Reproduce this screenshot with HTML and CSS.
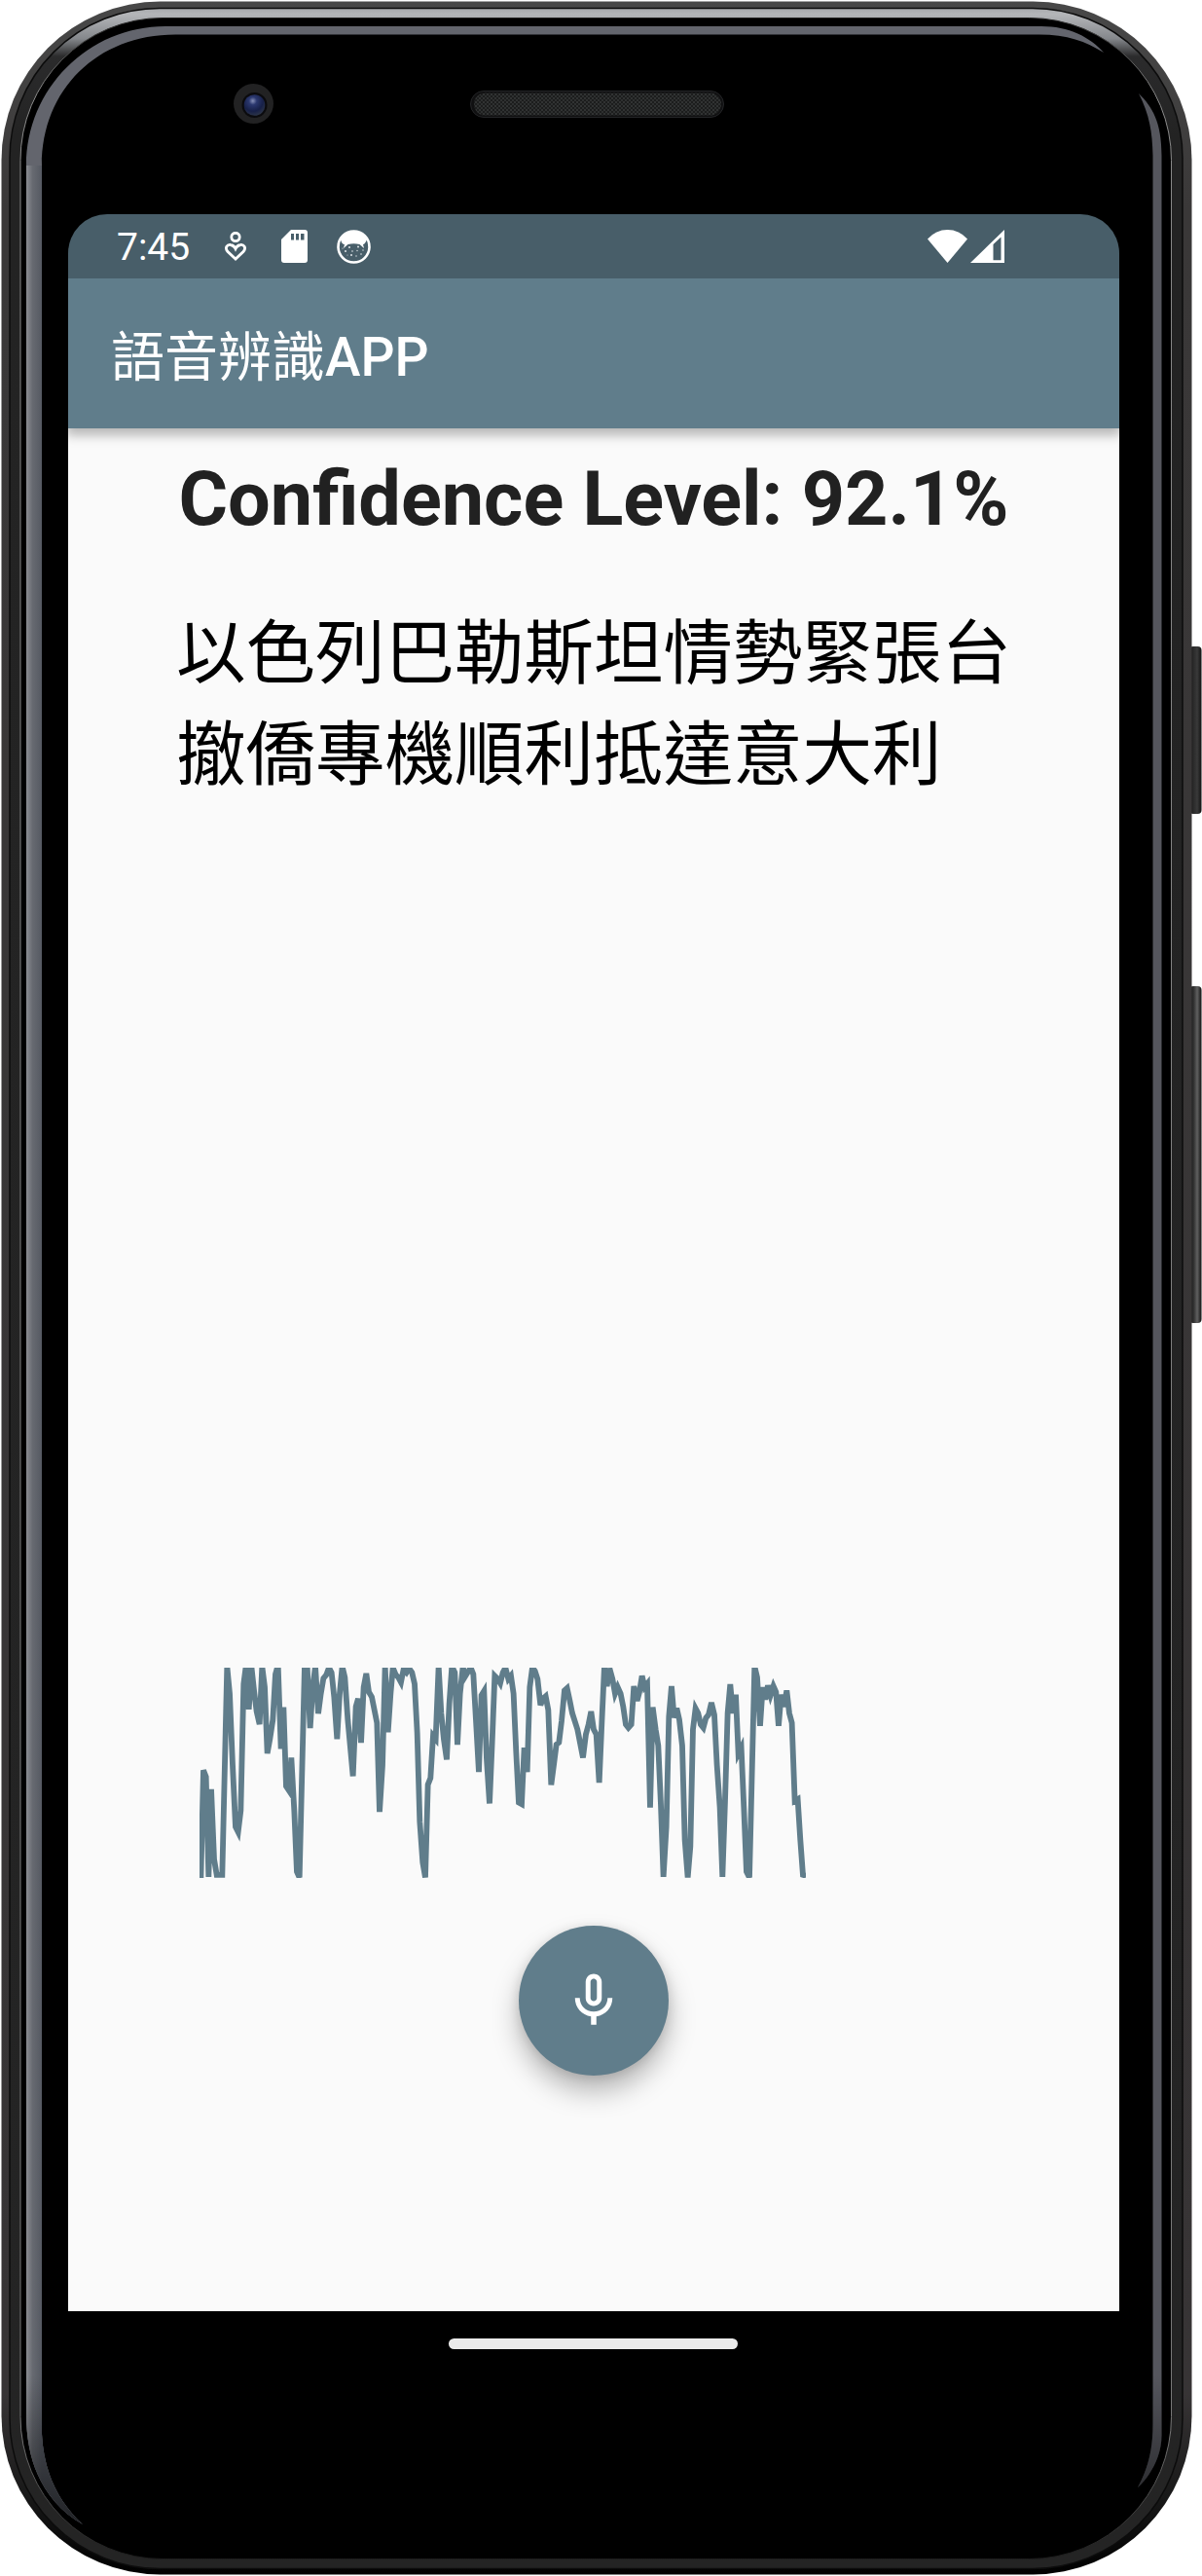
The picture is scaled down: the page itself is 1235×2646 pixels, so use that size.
FILE: index.html
```
<!DOCTYPE html>
<html lang="zh-Hant">
<head>
<meta charset="utf-8">
<title>語音辨識APP</title>
<link rel="stylesheet" href="styles.css">
</head>
<body>
<div class="phone">
  <svg class="phone-body" viewBox="0 0 1235 2646" aria-hidden="true">
    <defs>
      <linearGradient id="shell" x1="0" y1="0" x2="0" y2="1"><stop offset="0" stop-color="#484848"/><stop offset=".08" stop-color="#3a3838"/><stop offset=".93" stop-color="#373435"/><stop offset=".97" stop-color="#181818"/><stop offset="1" stop-color="#000"/></linearGradient>
      <linearGradient id="rim" gradientUnits="userSpaceOnUse" x1="0" y1="8" x2="0" y2="2638"><stop offset="0" stop-color="#a5a7aa"/><stop offset=".0025" stop-color="#b4b6b9"/><stop offset=".012" stop-color="#85888c"/><stop offset=".019" stop-color="#2b2b2c"/><stop offset=".05" stop-color="#232323"/><stop offset="1" stop-color="#242424"/></linearGradient>
      <linearGradient id="line" gradientUnits="userSpaceOnUse" x1="0" y1="18" x2="0" y2="2629"><stop offset="0" stop-color="#222"/><stop offset=".03" stop-color="#8a8a8a"/><stop offset=".95" stop-color="#777"/><stop offset="1" stop-color="#1c1c1c"/></linearGradient>
      <linearGradient id="glint" gradientUnits="userSpaceOnUse" x1="27" y1="0" x2="43" y2="0"><stop offset="0" stop-color="#8b8d92"/><stop offset=".4" stop-color="#676a71"/><stop offset="1" stop-color="#555962"/></linearGradient>
      <linearGradient id="tail" gradientUnits="userSpaceOnUse" x1="0" y1="2440" x2="0" y2="2590"><stop offset="0" stop-color="#000" stop-opacity="0"/><stop offset="1" stop-color="#000" stop-opacity=".6"/></linearGradient>
      <linearGradient id="key" x1="0" y1="0" x2="1" y2="0"><stop offset="0" stop-color="#111"/><stop offset=".35" stop-color="#2b2b2b"/><stop offset=".65" stop-color="#393939"/><stop offset="1" stop-color="#111"/></linearGradient>
      <linearGradient id="key2" x1="0" y1="0" x2="1" y2="0"><stop offset="0" stop-color="#111"/><stop offset=".35" stop-color="#303030"/><stop offset=".65" stop-color="#606060"/><stop offset="1" stop-color="#111"/></linearGradient>
      <radialGradient id="lens" cx=".42" cy=".3" r=".75"><stop offset="0" stop-color="#8790b8"/><stop offset=".25" stop-color="#2b386f"/><stop offset=".65" stop-color="#172048"/><stop offset="1" stop-color="#303848"/></radialGradient>
      <pattern id="mesh" width="4" height="4" patternUnits="userSpaceOnUse"><rect width="4" height="4" fill="#1c1d1d"/><circle cx="1" cy="1" r=".8" fill="#4b4e4e"/><circle cx="3" cy="3" r=".8" fill="#454848"/></pattern>
    </defs>
    <rect x="1222" y="664" width="12.5" height="172" rx="4" fill="url(#key)"/>
    <rect x="1222" y="1013" width="12.5" height="346" rx="4" fill="url(#key2)"/>
    <rect x="1.5" y="1.5" width="1223" height="2643" rx="163" fill="url(#shell)"/>
    <rect x="10" y="8.5" width="1205" height="2630" rx="154" fill="url(#rim)" stroke="#0c0c0c" stroke-width="1.5"/>
    <rect x="21" y="18.5" width="1182.500" height="2610" rx="146" fill="#000" stroke="url(#line)" stroke-width="1"/>
    <rect x="23.500" y="20" width="1177" height="2606" rx="144" fill="#000"/>
    <path d="M85 2593C45 2570 27 2530 27 2480V170C27 91 91 27 170 27H1070C1098 27 1120 38 1134 54C1115 42 1095 35 1065 35.500H180C100 35.500 43 92 43 170V2500C45 2540 60 2570 85 2593Z" fill="#63656d"/>
    <path d="M85 2593C45 2570 27 2530 27 2480V170H43V2500C45 2540 60 2570 85 2593Z" fill="url(#glint)"/>
    <path d="M85 2593C45 2570 27 2530 27 2480V2440H43V2500C45 2540 60 2570 85 2593Z" fill="url(#tail)"/>
    <path d="M1170 96C1184 110 1193.500 125 1193.500 160V2500C1194 2525 1180 2545 1169 2555C1180 2535 1184.500 2515 1184.500 2490V160C1184 135 1181 118 1170 96Z" fill="#55565d"/>
    <path d="M1193.500 2440V2500C1194 2525 1180 2545 1169 2555C1180 2535 1184.500 2515 1184.500 2490V2440Z" fill="url(#tail)"/>
    <circle cx="260.500" cy="106.500" r="20.500" fill="#222223"/>
    <circle cx="261.500" cy="108" r="13" fill="#0b0b0e"/>
    <circle cx="261.500" cy="108" r="10.800" fill="url(#lens)"/>
    <rect x="483.500" y="93.500" width="260" height="27" rx="13.500" fill="#101011" stroke="#242527"/>
    <rect x="487" y="95.500" width="254" height="23" rx="11.500" fill="url(#mesh)"/>
  </svg>

  <main class="screen">
    <header class="status-bar">
      <span class="clock">7:45</span>
      <svg class="ic-heart" viewBox="0 0 22 30"><circle cx="11" cy="5.500" r="4.200"/><path d="M11 28L3 20.500C-.5 16.500 2.500 13 6 13.500C8.500 13.800 10 15.500 11 17.500C12 15.500 13.500 13.800 16 13.500C19.500 13 22.500 16.500 19 20.500Z"/></svg>
      <svg class="ic-sd" viewBox="0 0 27 34"><path fill="#fff" d="M10 0H24Q27 0 27 3V31Q27 34 24 34H3Q0 34 0 31V10Z"/><path fill="#485e69" d="M10 4h3v6.500h-3zM15 4h3v6.500h-3zM20 4h3.500v6.500H20z"/></svg>
      <svg class="ic-face" viewBox="0 0 35 35"><circle cx="17.500" cy="17.500" r="16" fill="none" stroke="#fff" stroke-width="2.600"/><path fill="#fff" d="M4 10Q9 1 17.500 1T31 10Q29 15 27 15L28 19L23.500 15Q17.500 13.500 11.500 15L7 19L8 15Q5 15 4 10Z"/><g fill="#dfe5e8"><circle cx="13" cy="18" r="1"/><circle cx="22" cy="17.500" r="1"/><circle cx="9" cy="22" r="1"/><circle cx="16" cy="22" r=".8"/><circle cx="21" cy="21.500" r=".7"/><circle cx="27" cy="21" r=".7"/><circle cx="15" cy="26" r="1"/><circle cx="20" cy="27" r=".7"/><circle cx="25" cy="25" r=".8"/><circle cx="6" cy="19" r=".6"/><circle cx="11" cy="26" r=".5"/></g></svg>
      <svg class="ic-wifi" viewBox="0 0 41 34"><path fill="#fff" d="M20.500 34L0 9.500Q8.500 0 20.500 0T41 9.500Z"/></svg>
      <svg class="ic-cell" viewBox="0 0 35 34"><path fill="#fff" fill-rule="evenodd" d="M0 34L35 0V34ZM23.500 15V31.200H31.500V7.600Z"/></svg>
    </header>
    <h1 class="app-bar"><span class="app-name">語音辨識</span>APP</h1>
    <section class="content">
      <h2 class="confidence">Confidence Level: 92.1%</h2>
      <p class="transcript">以色列巴勒斯坦情勢緊張台撤僑專機順利抵達意大利</p>
      <svg class="wave" viewBox="45 70 1870 646" preserveAspectRatio="none"><polyline points="49,724 57,386 65,406 73,714 81,444 90,660 98,708 115,708 130,66 138,150 147,370 156,560 164,576 172,510 181,120 188,66 197,198 205,66 213,140 221,205 230,244 238,66 246,130 254,334 262,290 271,230 279,90 287,62 296,320 304,192 312,435 322,450 328,347 337,510 345,698 353,716 369,66 377,66 386,256 394,130 402,66 411,211 419,150 427,103 436,92 444,70 452,85 460,160 469,290 477,150 485,66 493,100 502,230 518,404 527,190 534,165 543,301 551,130 559,88 567,145 576,160 592,240 600,514 609,370 617,66 626,269 634,150 641,70 650,92 658,100 666,115 674,75 683,85 691,72 700,85 708,120 716,270 724,545 733,670 741,716 749,430 757,410 765,280 773,290 782,66 790,210 798,290 807,353 815,180 823,66 832,85 840,307 848,150 857,66 862,100 873,82 881,70 889,90 897,230 906,391 914,155 922,142 930,350 939,488 947,300 955,95 963,103 972,118 980,85 988,70 997,105 1005,95 1013,150 1021,330 1029,485 1038,490 1046,316 1055,391 1063,130 1071,70 1079,80 1087,105 1096,185 1104,165 1112,158 1120,200 1129,431 1137,370 1145,307 1153,300 1161,235 1170,140 1178,133 1186,170 1194,210 1210,260 1227,347 1236,275 1244,245 1252,205 1260,260 1268,275 1277,424 1285,240 1293,66 1301,127 1309,72 1318,105 1326,150 1334,130 1343,150 1351,190 1359,245 1367,255 1376,245 1384,127 1394,172 1401,145 1409,95 1417,130 1425,120 1434,501 1442,192 1451,260 1459,310 1467,490 1475,714 1484,560 1492,220 1500,127 1508,224 1516,195 1524,230 1533,310 1541,600 1550,716 1558,620 1566,260 1574,195 1582,210 1590,245 1598,255 1606,225 1614,215 1623,178 1632,215 1640,370 1649,500 1657,714 1665,480 1673,210 1681,121 1689,210 1698,153 1706,334 1715,316 1723,500 1731,698 1740,716 1756,66 1764,100 1773,249 1781,130 1789,168 1797,125 1805,155 1814,127 1822,145 1830,249 1838,153 1847,190 1855,140 1863,210 1871,240 1880,480 1889,475 1897,600 1905,708 1915,711"/></svg>
      <button class="mic-button" aria-label="Record"><svg viewBox="0 0 24 24"><path d="M12 14c1.660 0 3-1.340 3-3V5c0-1.660-1.340-3-3-3S9 3.340 9 5v6c0 1.660 1.340 3 3 3zm-1.200-9c0-.66.54-1.200 1.200-1.200s1.200.54 1.200 1.200v6c0 .66-.54 1.200-1.200 1.200s-1.200-.54-1.200-1.200V5zM17.200 11c0 2.870-2.330 5.100-5.200 5.100S6.800 13.870 6.800 11H5c0 3.530 2.610 6.430 6 6.920V21h2v-3.080c3.390-.49 6-3.390 6-6.920h-1.800z"/></svg></button>
    </section>
    <footer class="nav-bar"><span class="nav-pill"></span></footer>
  </main>
</div>
</body>
</html>
```
FILE: styles.css
```
* { box-sizing: border-box; }
body { margin: 0; background: #fff; font-family: Roboto, "Noto Sans CJK TC", sans-serif; }
.phone { position: relative; width: 1235px; height: 2646px; padding: 220px 85px 206px 70px; overflow: hidden; }
.phone-body { position: absolute; inset: 0; width: 1235px; height: 2646px; }
.screen { position: relative; display: flex; flex-direction: column; width: 1080px; height: 2220px; border-radius: 40px 40px 0 0; overflow: hidden; }
.status-bar { position: relative; z-index: 2; display: flex; align-items: center; height: 66px; flex: none; padding: 0 118px 0 50px; background: #485e69; color: #fff; }
.clock { width: 111px; font-size: 39px; line-height: 66px; padding-top: 2px; }
.ic-heart { width: 22px; height: 30px; fill: none; stroke: #fff; stroke-width: 2.8; }
.ic-sd { width: 27px; height: 34px; margin-left: 36px; }
.ic-face { width: 35px; height: 35px; margin-left: 30px; }
.ic-wifi { width: 41px; height: 34px; margin-left: auto; }
.ic-cell { width: 35px; height: 34px; margin-left: 3px; }
.app-bar { position: relative; z-index: 1; flex: none; height: 154px; margin: 0; padding: 6px 0 0 44px; background: #607d8b; color: #fff; font-size: 55px; font-weight: 500; line-height: 150px; box-shadow: 0 5px 11px 2px rgba(0,0,0,.28); }
.app-name { font-weight: 400; }
.content { display: flex; flex-direction: column; align-items: center; height: 1934px; flex: none; background: #fafafa; }
.confidence { margin: 22px 0 0; font-size: 77.4px; line-height: 101px; font-weight: 700; color: #212121; white-space: nowrap; }
.transcript { width: 858px; height: 207px; margin: 51px 0 0; font-size: 71.5px; line-height: 103.500px; color: #000; font-family: "Noto Sans CJK TC", sans-serif; }
.wave { align-self: flex-start; width: 623.300px; height: 215.500px; margin: 892px 0 0 135px; overflow: hidden; fill: none; stroke: #607d8b; stroke-width: 17.5; flex: none; }
.mic-button { flex: none; display: grid; place-items: center; width: 154px; height: 154px; margin-top: 49px; padding: 0; border: 0; border-radius: 50%; background: #607d8b; box-shadow: 0 16px 28px rgba(0,0,0,.28), 0 2px 12px rgba(0,0,0,.12); }
.mic-button svg { width: 66px; height: 66px; fill: #fff; }
.nav-bar { display: flex; justify-content: center; height: 66px; padding: 27.5px 2px 0 0; background: #000; }
.nav-pill { width: 297px; height: 11px; border-radius: 6px; background: #ebebeb; }
```
